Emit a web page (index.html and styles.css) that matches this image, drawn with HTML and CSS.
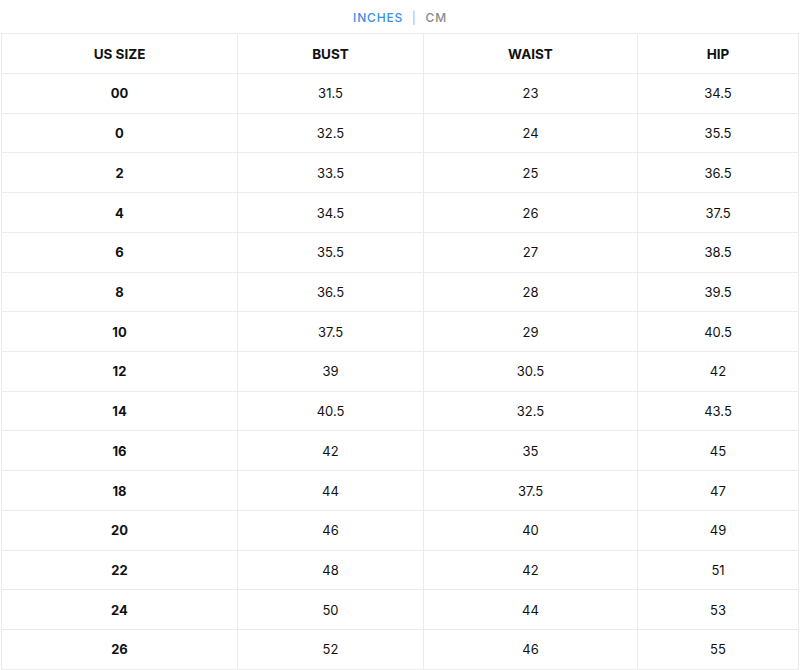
FILE: index.html
```html
<!DOCTYPE html>
<html>
<head>
<meta charset="utf-8">
<link rel="stylesheet" href="styles.css">
</head>
<body>
<div class="units"><span class="unit active">INCHES</span><span class="sep">|</span><span class="unit">CM</span></div>
<table class="chart">
<colgroup><col class="c1"><col class="c2"><col class="c3"><col class="c4"></colgroup>
<thead><tr><th>US SIZE</th><th>BUST</th><th>WAIST</th><th>HIP</th></tr></thead>
<tbody>
<tr><th>00</th><td>31.5</td><td>23</td><td>34.5</td></tr>
<tr><th>0</th><td>32.5</td><td>24</td><td>35.5</td></tr>
<tr><th>2</th><td>33.5</td><td>25</td><td>36.5</td></tr>
<tr><th>4</th><td>34.5</td><td>26</td><td>37.5</td></tr>
<tr><th>6</th><td>35.5</td><td>27</td><td>38.5</td></tr>
<tr><th>8</th><td>36.5</td><td>28</td><td>39.5</td></tr>
<tr><th>10</th><td>37.5</td><td>29</td><td>40.5</td></tr>
<tr><th>12</th><td>39</td><td>30.5</td><td>42</td></tr>
<tr><th>14</th><td>40.5</td><td>32.5</td><td>43.5</td></tr>
<tr><th>16</th><td>42</td><td>35</td><td>45</td></tr>
<tr><th>18</th><td>44</td><td>37.5</td><td>47</td></tr>
<tr><th>20</th><td>46</td><td>40</td><td>49</td></tr>
<tr><th>22</th><td>48</td><td>42</td><td>51</td></tr>
<tr><th>24</th><td>50</td><td>44</td><td>53</td></tr>
<tr><th>26</th><td>52</td><td>46</td><td>55</td></tr>
</tbody>
</table>
</body>
</html>
```
FILE: styles.css
```css
html, body { margin: 0; padding: 0; background: #fff; }
body { font-family: Inter, "Open Sans", sans-serif; color: #111; }
.units {
  height: 33px;
  display: flex;
  justify-content: center;
  align-items: center;
  gap: 9px;
  font-size: 12px;
  letter-spacing: 0.8px;
  padding-top: 1px;
  box-sizing: border-box;
}
.unit { color: #8a8a8a; font-weight: 500; }
.unit.active { color: #3d8ee6; }
.sep { color: #9a9a9a; font-weight: 300; }
.chart {
  margin-left: 1px;
  width: 797px;
  border-collapse: collapse;
  table-layout: fixed;
  font-size: 13px;
}
.c1 { width: 236px; }
.c2 { width: 186px; }
.c3 { width: 214px; }
.c4 { width: 161px; }
.chart th, .chart td {
  border: 1px solid #ebebeb;
  text-align: center;
  height: 39.73px;
  padding: 0;
  box-sizing: border-box;
}
.chart thead th { font-weight: 700; font-size: 13.5px; height: 40px; }
.chart tbody th { font-weight: 700; }
.chart td { font-weight: 400; }
```
